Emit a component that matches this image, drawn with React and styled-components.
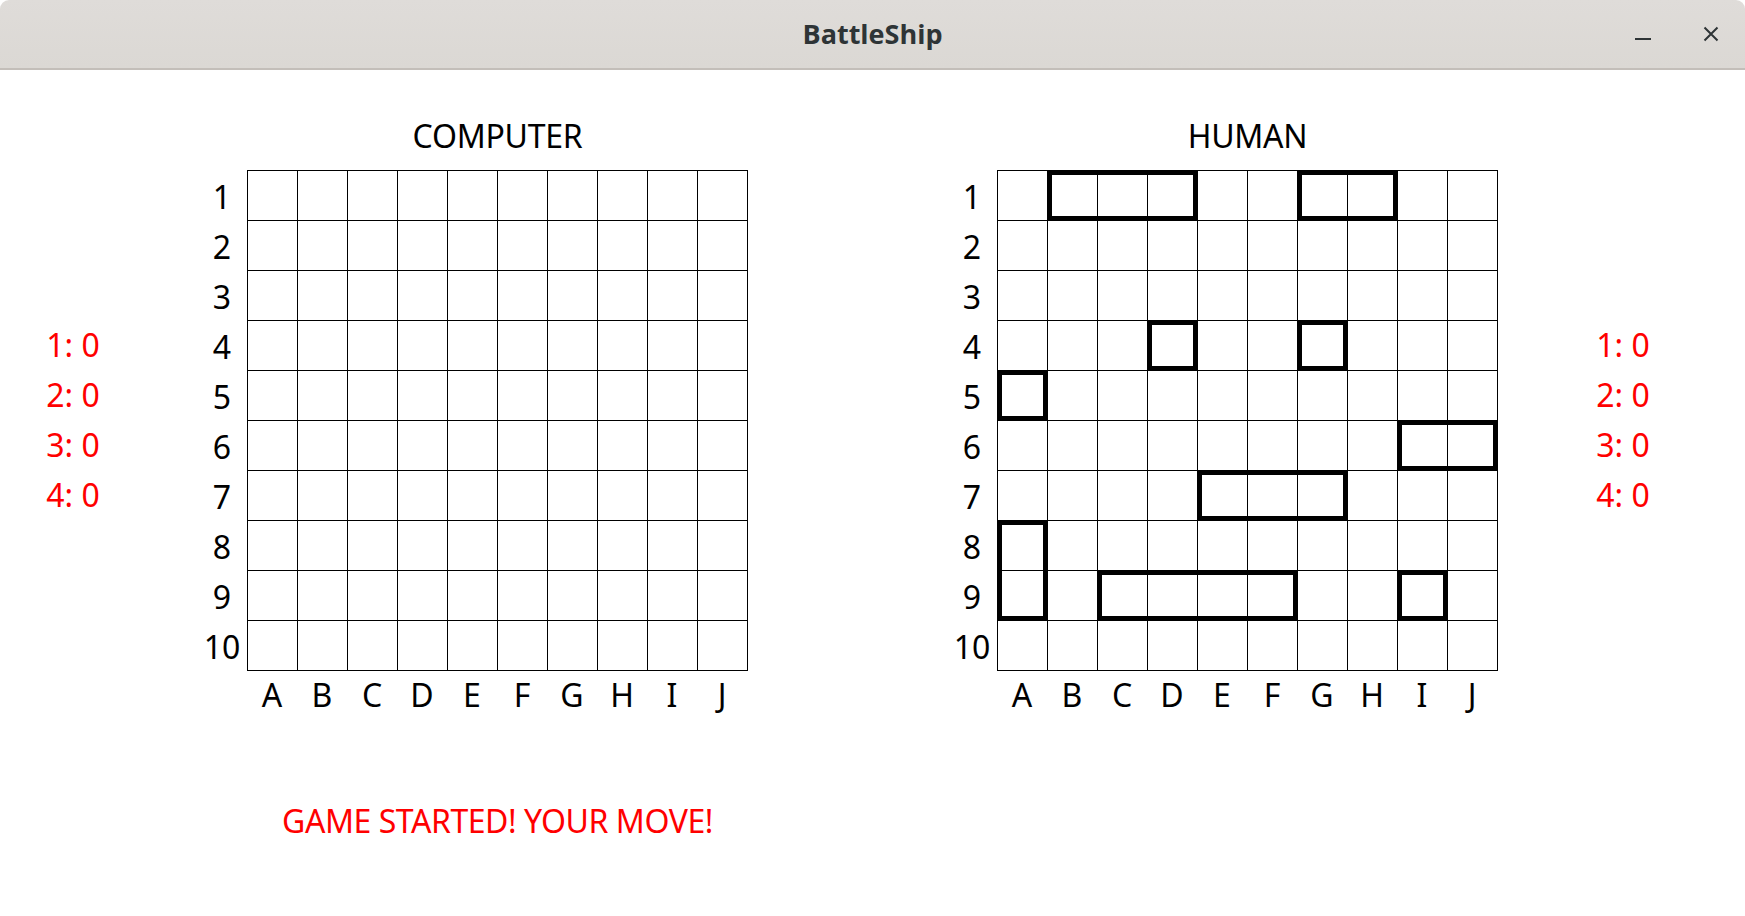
import React from "react";
import styled, { createGlobalStyle } from "styled-components";

const GlobalStyle = createGlobalStyle`
  html, body {
    margin: 0;
    padding: 0;
    background: #ffffff;
  }
  body {
    font-family: "Noto Sans", "Open Sans", "DejaVu Sans", sans-serif;
    color: #000;
  }
  * { box-sizing: border-box; }
`;

const Window = styled.div`
  width: 1745px;
  height: 916px;
  display: flex;
  flex-direction: column;
  background: #ffffff;
  overflow: hidden;
`;

const TitleBar = styled.header`
  height: 70px;
  flex: none;
  display: grid;
  grid-template-columns: 1fr auto 1fr;
  align-items: center;
  background: linear-gradient(#dfdcd9, #dbd8d4);
  border-bottom: 2px solid #c3beb9;
  border-radius: 9px 9px 0 0;
`;

const WindowTitle = styled.h1`
  grid-column: 2;
  margin: 0;
  font-family: "Open Sans", "Noto Sans", sans-serif;
  font-weight: 700;
  font-size: 27px;
  color: #2e3436;
  line-height: 1;
  padding-bottom: 2px;
`;

const Controls = styled.div`
  grid-column: 3;
  justify-self: end;
  display: flex;
  gap: 20px;
  padding-right: 10px;
`;

const ControlButton = styled.button`
  width: 48px;
  height: 40px;
  padding: 0;
  border: none;
  background: transparent;
  color: #2e3436;
  display: flex;
  align-items: center;
  justify-content: center;
  cursor: pointer;
`;

const Content = styled.main`
  display: flex;
  align-items: flex-start;
  padding-top: 47px;
`;

const ScoreColumn = styled.div`
  width: ${(p) => p.$width}px;
  margin-left: ${(p) => p.$offset}px;
  margin-top: 203px;
  display: flex;
  flex-direction: column;
`;

const ScoreLine = styled.div`
  height: 50px;
  line-height: 50px;
  text-align: center;
  font-size: 32px;
  color: #ff0000;
  white-space: nowrap;
`;

const Panel = styled.section`
  margin-left: ${(p) => p.$offset}px;
  display: grid;
  grid-template-columns: 50px 501px;
  align-items: start;
`;

const BoardTitle = styled.h2`
  grid-column: 2;
  margin: 0 0 13px;
  height: 40px;
  line-height: 38px;
  text-align: center;
  font-weight: 400;
  font-size: 32px;
  letter-spacing: -0.25px;
`;

const RowLabels = styled.div`
  grid-column: 1;
  padding-top: 2px;
  display: flex;
  flex-direction: column;
`;

const Label = styled.div`
  height: 50px;
  line-height: 50px;
  text-align: center;
  font-size: 32px;
  white-space: nowrap;
`;

const BoardArea = styled.div`
  grid-column: 2;
  position: relative;
  width: 501px;
  height: 501px;
`;

const Grid = styled.div`
  display: grid;
  grid-template-columns: repeat(10, 50px);
  grid-auto-rows: 50px;
  border-left: 1px solid #000;
  border-top: 1px solid #000;
  width: 501px;
`;

const Cell = styled.div`
  border-right: 1px solid #000;
  border-bottom: 1px solid #000;
  background: #fff;
`;

const Ship = styled.div`
  position: absolute;
  border: 5px solid #000;
  pointer-events: none;
`;

const ColLabels = styled.div`
  grid-column: 2;
  display: grid;
  grid-template-columns: repeat(10, 50px);
  height: 46px;
  width: 501px;
`;

const ColLabel = styled.div`
  line-height: 46px;
  text-align: center;
  font-size: 32px;
`;

const Message = styled.div`
  grid-column: 2;
  margin-top: 78px;
  height: 50px;
  line-height: 50px;
  text-align: center;
  font-size: 32px;
  letter-spacing: -0.45px;
  color: #ff0000;
  white-space: nowrap;
`;

const LETTERS = ["A", "B", "C", "D", "E", "F", "G", "H", "I", "J"];
const ROWS = [1, 2, 3, 4, 5, 6, 7, 8, 9, 10];

const HUMAN_SHIPS = [
  { col: 1, row: 0, w: 3, h: 1 },
  { col: 6, row: 0, w: 2, h: 1 },
  { col: 3, row: 3, w: 1, h: 1 },
  { col: 6, row: 3, w: 1, h: 1 },
  { col: 0, row: 4, w: 1, h: 1 },
  { col: 8, row: 5, w: 2, h: 1 },
  { col: 4, row: 6, w: 3, h: 1 },
  { col: 0, row: 7, w: 1, h: 2 },
  { col: 2, row: 8, w: 4, h: 1 },
  { col: 8, row: 8, w: 1, h: 1 },
];

const SCORES = ["1: 0", "2: 0", "3: 0", "4: 0"];

function Board({ title, ships, offset, children }) {
  return (
    <Panel $offset={offset}>
      <BoardTitle>{title}</BoardTitle>
      <RowLabels>
        {ROWS.map((r) => (
          <Label key={r}>{r}</Label>
        ))}
      </RowLabels>
      <BoardArea>
        <Grid>
          {Array.from({ length: 100 }).map((_, i) => (
            <Cell key={i} />
          ))}
        </Grid>
        {ships.map((s, i) => (
          <Ship
            key={i}
            style={{
              left: s.col * 50,
              top: s.row * 50,
              width: s.w * 50 + 1,
              height: s.h * 50 + 1,
            }}
          />
        ))}
      </BoardArea>
      <ColLabels>
        {LETTERS.map((l) => (
          <ColLabel key={l}>{l}</ColLabel>
        ))}
      </ColLabels>
      {children}
    </Panel>
  );
}

function Scores({ width, offset }) {
  return (
    <ScoreColumn $width={width} $offset={offset}>
      {SCORES.map((s) => (
        <ScoreLine key={s}>{s}</ScoreLine>
      ))}
    </ScoreColumn>
  );
}

export default function App() {
  return (
    <>
      <GlobalStyle />
      <Window>
        <TitleBar>
          <WindowTitle>BattleShip</WindowTitle>
          <Controls>
            <ControlButton aria-label="Minimize">
              <svg width="16" height="16" viewBox="0 0 16 16">
                <rect x="0" y="12" width="16" height="2" fill="currentColor" />
              </svg>
            </ControlButton>
            <ControlButton aria-label="Close">
              <svg width="16" height="16" viewBox="0 0 16 16">
                <path
                  d="M1.5 1.5 L14.5 14.5 M14.5 1.5 L1.5 14.5"
                  stroke="currentColor"
                  strokeWidth="2"
                  fill="none"
                />
              </svg>
            </ControlButton>
          </Controls>
        </TitleBar>
        <Content>
          <Scores width={146} offset={0} />
          <Board title="COMPUTER" ships={[]} offset={51}>
            <Message>GAME STARTED! YOUR MOVE!</Message>
          </Board>
          <Board title="HUMAN" ships={HUMAN_SHIPS} offset={199} />
          <Scores width={150} offset={50} />
        </Content>
      </Window>
    </>
  );
}
